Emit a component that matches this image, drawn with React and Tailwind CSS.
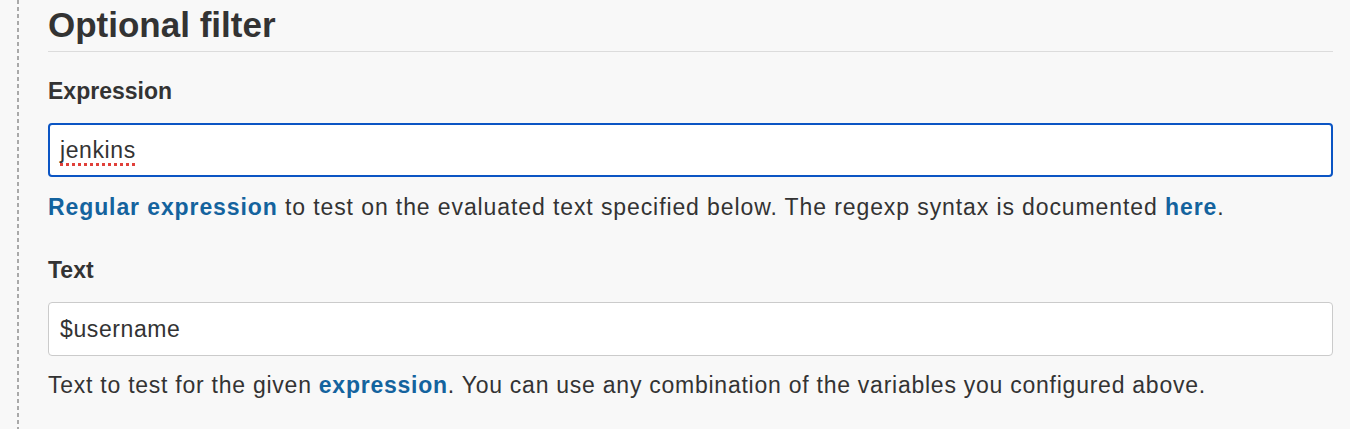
import React from 'react';

const font = { fontFamily: '"Liberation Sans", Arial, Helvetica, sans-serif' };

function Field({ label, focused, children, help, first }) {
  return (
    <div className={first ? 'mt-[24px]' : 'mt-[33px]'}>
      <div className="text-[23px] leading-[30px] font-bold text-[#333]">{label}</div>
      <div
        className={
          'mt-[17px] h-[54px] rounded-[4px] bg-white flex items-center px-[10px] text-[23px] tracking-[0.6px] text-[#333] ' +
          (focused ? 'border-2 border-[#0b55c4]' : 'border border-[#cbcbcb] px-[11px]')
        }
      >
        {children}
      </div>
      <p
        className={
          'text-[23px] leading-[30px] text-[#333] whitespace-nowrap ' +
          (focused ? 'mt-[15px] tracking-[0.9px]' : 'mt-[14px] tracking-[0.75px]')
        }
      >
        {help}
      </p>
    </div>
  );
}

export default function App() {
  return (
    <div className="min-h-screen w-full bg-[#f8f8f8] flex pl-[17px] pr-[17px]" style={font}>
      {/* dashed guide line */}
      <div className="w-[2px] self-stretch bg-[repeating-linear-gradient(to_bottom,#a9a9a9_0px,#a9a9a9_4px,transparent_4px,transparent_7px)]" />
      <div className="flex-1 ml-[29px]">
        <h2 className="pt-[5px] pb-[6px] text-[35px] leading-[40px] font-bold text-[#333] border-b border-[#dcdcdc]">
          Optional filter
        </h2>

        <Field
          first
          focused
          label="Expression"
          help={
            <>
              <a className="font-bold text-[#14639e]">Regular expression</a> to test on the evaluated text specified below. The regexp syntax is documented{' '}
              <a className="font-bold text-[#14639e]">here</a>.
            </>
          }
        >
          <span className="underline decoration-dotted decoration-[#e0403a] decoration-[3px] underline-offset-[5px]">jenkins</span>
        </Field>

        <Field
          label="Text"
          help={
            <>
              Text to test for the given <a className="font-bold text-[#14639e]">expression</a>. You can use any combination of the variables you configured above.
            </>
          }
        >
          $username
        </Field>
      </div>
    </div>
  );
}
